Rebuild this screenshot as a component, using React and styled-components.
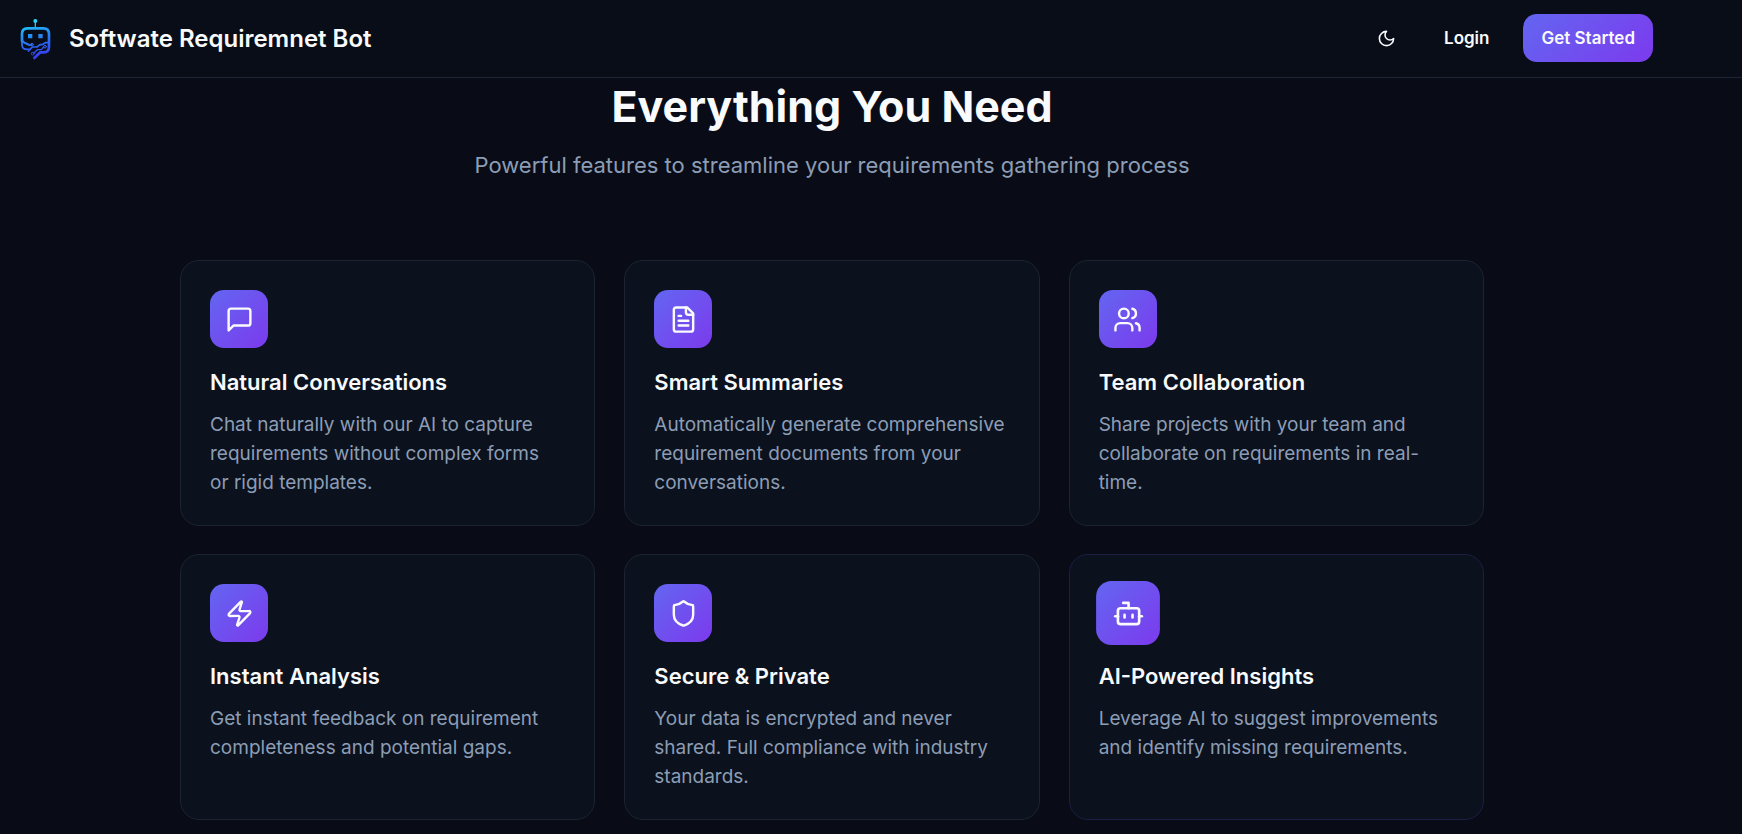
import styled, { createGlobalStyle } from 'styled-components';
import { Bot, Shield, Users, Zap } from 'lucide-react';


const GlobalStyle = createGlobalStyle`
  * {
    box-sizing: border-box;
    margin: 0;
  }
  body {
    background: #090c17;
    color: #f8fafc;
    font-family: Inter, "Liberation Sans", sans-serif;
  }
`;

const Page = styled.div`
  min-height: 100vh;
  overflow: hidden;
`;

const Header = styled.header`
  display: flex;
  align-items: flex-start;
  justify-content: space-between;
  height: 78px;
  padding: 14px 89px 0 20px;
  background: #080d17;
  border-bottom: 1px solid #1e2435;
`;

const Brand = styled.a`
  display: flex;
  align-items: center;
  gap: 18px;
  height: 50px;
  color: inherit;
  font-size: 24px;
  font-weight: 600;
  line-height: 32px;
  text-decoration: none;
`;

const Nav = styled.nav`
  display: flex;
  align-items: center;
`;

const IconButton = styled.button`
  display: flex;
  align-items: center;
  justify-content: center;
  width: 48px;
  height: 48px;
  margin-right: 16px;
  border: 0;
  border-radius: 14px;
  background: transparent;
  color: inherit;
  cursor: pointer;
`;

const NavButton = styled.button`
  height: 48px;
  padding: 0 18px;
  border: 0;
  border-radius: 14px;
  background: ${({ $primary }) => ($primary ? 'linear-gradient(135deg, #6366f1, #7c3aed)' : 'transparent')};
  color: inherit;
  font: 600 17px/24px Inter, "Liberation Sans", sans-serif;
  margin-left: ${({ $primary }) => ($primary ? '16px' : '0')};
  cursor: pointer;
`;

const Features = styled.main`
  padding: 0 78px 14px 0;
`;

const Intro = styled.div`
  padding: 4px 24px 0;
  text-align: center;
`;

const Heading = styled.h2`
  font-size: 43px;
  font-weight: 700;
  line-height: 48px;
`;

const Lead = styled.p`
  margin-top: 18px;
  color: #8c9db5;
  font-size: 22px;
  line-height: 34px;
`;

const Grid = styled.div`
  display: grid;
  grid-template-columns: repeat(3, 1fr);
  gap: 28px 29px;
  max-width: 1304px;
  margin: 78px auto 0;
`;

const Card = styled.article`
  padding: 29px 33px 28px 29px;
  border: 1px solid ${({ $active }) => ($active ? '#1c1e44' : '#1b2433')};
  border-radius: 19px;
  background: #0b111d;
`;

const IconTile = styled.div`
  display: flex;
  align-items: center;
  justify-content: center;
  width: 58px;
  height: 58px;
  border-radius: 14px;
  background: linear-gradient(135deg, #6366f1, #7c3aed);
  transform: ${({ $active }) => ($active ? 'scale(1.1)' : 'none')};
`;

const CardTitle = styled.h3`
  margin: 19px 0 13px;
  font-size: 22px;
  font-weight: 600;
  line-height: 30px;
`;

const CardText = styled.p`
  color: #8c9db5;
  font-size: 19px;
  line-height: 29px;
`;

const LineIcon = ({ size, children }) => (
  <svg width={size} height={size} viewBox="0 0 24 24" fill="none" stroke="currentColor" strokeWidth="2" strokeLinecap="round" strokeLinejoin="round" aria-hidden="true">
    {children}
  </svg>
);

const Message = ({ size }) => (
  <LineIcon size={size}>
    <path d="M21 15a2 2 0 0 1-2 2H7l-4 4V5a2 2 0 0 1 2-2h14a2 2 0 0 1 2 2z" />
  </LineIcon>
);

const Document = ({ size }) => (
  <LineIcon size={size}>
    <path d="M15 2H6a2 2 0 0 0-2 2v16a2 2 0 0 0 2 2h12a2 2 0 0 0 2-2V7Z" />
    <path d="M14 2v4a2 2 0 0 0 2 2h4M10 9H8M16 13H8M16 17H8" />
  </LineIcon>
);

const Moon = ({ size }) => (
  <LineIcon size={size}>
    <path d="M12 3a6 6 0 0 0 9 9 9 9 0 1 1-9-9Z" />
  </LineIcon>
);

const features = [
  { title: 'Natural Conversations', icon: Message, text: 'Chat naturally with our AI to capture requirements without complex forms or rigid templates.' },
  { title: 'Smart Summaries', icon: Document, text: 'Automatically generate comprehensive requirement documents from your conversations.' },
  { title: 'Team Collaboration', icon: Users, text: 'Share projects with your team and collaborate on requirements in real-time.' },
  { title: 'Instant Analysis', icon: Zap, text: 'Get instant feedback on requirement completeness and potential gaps.' },
  { title: 'Secure & Private', icon: Shield, text: 'Your data is encrypted and never shared. Full compliance with industry standards.' },
  { title: 'AI-Powered Insights', icon: Bot, text: 'Leverage AI to suggest improvements and identify missing requirements.', active: true },
];

const Logo = () => (
  <svg width="31" height="42" viewBox="30 24 93 126" fill="none" stroke="url(#logo)" strokeLinecap="round" strokeLinejoin="round" aria-hidden="true">
    <defs>
      <linearGradient id="logo" gradientUnits="userSpaceOnUse" x1="62" y1="28" x2="92" y2="146">
        <stop offset="0" stopColor="#2be4f5" />
        <stop offset="0.25" stopColor="#22a7f6" />
        <stop offset="0.65" stopColor="#2b66f6" />
        <stop offset="1" stopColor="#3b35ee" />
      </linearGradient>
    </defs>
    <circle cx="76" cy="33" r="6" fill="url(#logo)" stroke="none" />
    <path d="M76 38V52" strokeWidth="4" />
    <path d="M36 94V72Q36 55 53 55H100Q117 55 117 72V110Q117 126 101 127H91L73 144" strokeWidth="8" />
    <path d="M36 88Q36 96 45 99L58 105H64" strokeWidth="6" />
    <path d="M36 94V104Q36 118 52 118H60L67 111H81L90 104H96L106 98H116" strokeWidth="5" />
    <path d="M71 130L82 119H94L101 111M55 124L60 119" strokeWidth="4" />
    <circle cx="66" cy="104" r="4" strokeWidth="3" />
    <circle cx="68" cy="131" r="4" strokeWidth="3" />
    <circle cx="105" cy="110" r="4" strokeWidth="3" />
    <path d="M54 72H67V85H54ZM85 72H98V85H85Z" fill="url(#logo)" stroke="none" />
  </svg>
);

const App = () => {
  return (
    <Page>
      <GlobalStyle />
      <Header>
        <Brand href="#">
          <Logo />
          Softwate Requiremnet Bot
        </Brand>
        <Nav>
          <IconButton aria-label="Toggle theme">
            <Moon size={19} />
          </IconButton>
          <NavButton>Login</NavButton>
          <NavButton $primary>Get Started</NavButton>
        </Nav>
      </Header>
      <Features>
        <Intro>
          <Heading>Everything You Need</Heading>
          <Lead>Powerful features to streamline your requirements gathering process</Lead>
        </Intro>
        <Grid>
          {features.map(({ title, icon: Icon, text, active }) => (
            <Card key={title} $active={active}>
              <IconTile $active={active}>
                <Icon size={29} />
              </IconTile>
              <CardTitle>{title}</CardTitle>
              <CardText>{text}</CardText>
            </Card>
          ))}
        </Grid>
      </Features>
    </Page>
  );
};

export default App;
